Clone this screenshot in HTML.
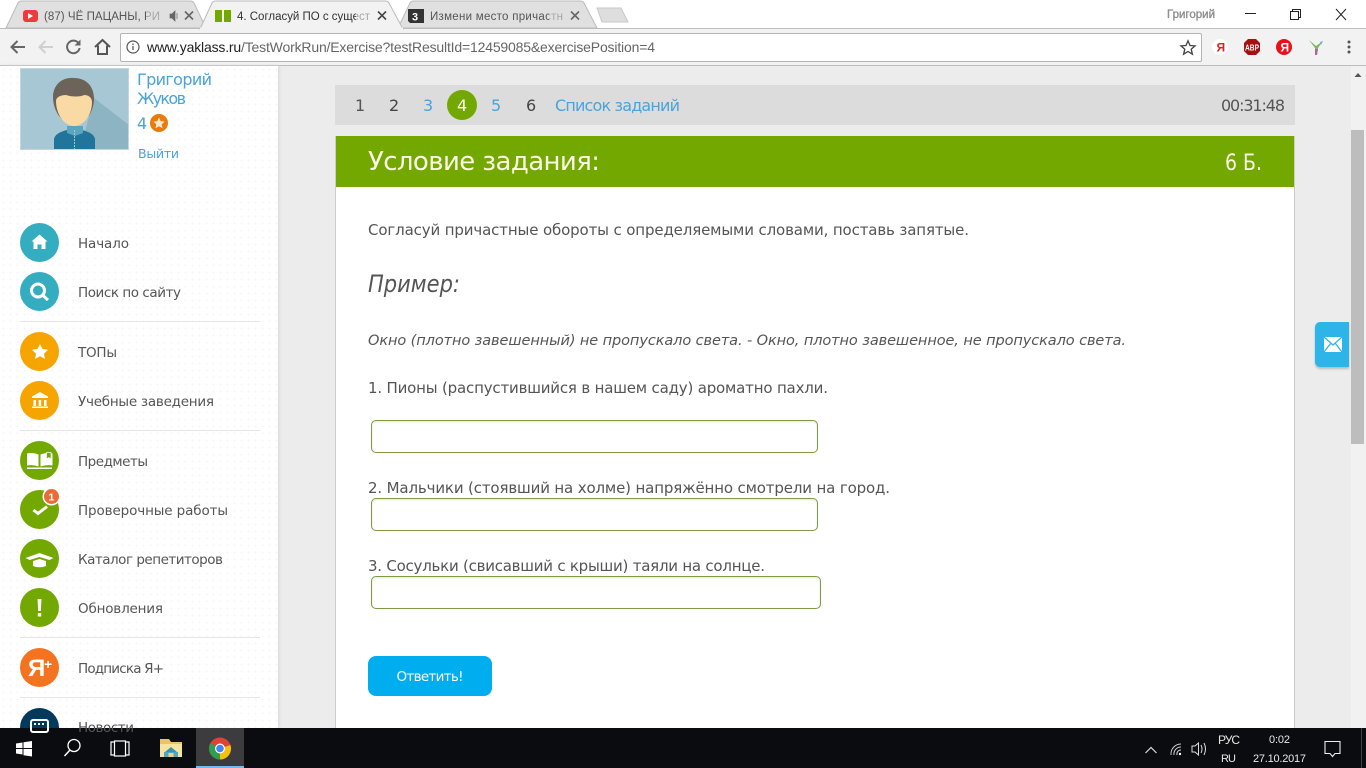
<!DOCTYPE html>
<html lang="ru"><head><meta charset="utf-8"><title>YaKlass</title>
<style>
html,body{margin:0;padding:0;width:1366px;height:768px;overflow:hidden;background:#ececec;font-family:"Liberation Sans","Noto Sans CJK SC",sans-serif}
div,input,button{position:absolute;box-sizing:border-box}
#side{left:0;top:66px;width:278px;height:662px;background-color:#fff;background-image:radial-gradient(#f6f6f6 .8px,transparent 1px);background-size:7px 7px;box-shadow:1px 0 3px #d5d5d5}
.sep{left:20px;width:240px;height:1px;background:#e6e6e6}
.c{left:20px;width:39px;height:39px;border-radius:50%}
input{background:#fff;border:1px solid #7f9a45;border-radius:5px;box-shadow:inset 0 1px 2px #e3e8d5;height:33px;left:371px;width:447px;padding:0;margin:0}
#ov{left:0;top:0}
svg{position:absolute;left:0;top:0}
.o{font-family:"DejaVu Sans","Liberation Sans",sans-serif}
</style></head><body>

<div style="left:0;top:0;width:1366px;height:28px;background:#fff"></div>
<div style="left:0;top:28px;width:1366px;height:38px;background:#f2f2f2;border-top:1px solid #bdbdbd;border-bottom:1px solid #bdbdbd"></div>
<div style="left:120px;top:33px;width:1082px;height:29px;background:#fff;border:1px solid #b4b4b4;border-radius:2px"></div>

<div id="side"></div>
<div class="sep" style="top:321px"></div>
<div class="sep" style="top:430px"></div>
<div class="sep" style="top:637px"></div>
<div class="sep" style="top:697px"></div>
<div class="c" style="top:223px;background:#35adc1"></div>
<div class="c" style="top:272px;background:#35adc1"></div>
<div class="c" style="top:332px;background:#f5a400"></div>
<div class="c" style="top:381px;background:#f5a400"></div>
<div class="c" style="top:441px;background:#73a800"></div>
<div class="c" style="top:490px;background:#73a800"></div>
<div class="c" style="top:539px;background:#73a800"></div>
<div class="c" style="top:588px;background:#73a800"></div>
<div class="c" style="top:648px;background:#f47321"></div>
<div class="c" style="top:708px;background:#03395c"></div>

<div style="left:335px;top:85px;width:960px;height:40px;background:#dcdcdc"></div>
<div style="left:447px;top:90px;width:30px;height:30px;border-radius:50%;background:#73a800"></div>
<div style="left:335px;top:136px;width:960px;height:600px;background:#fff;border-left:1px solid #ccc;border-right:1px solid #ccc"></div>
<div style="left:336px;top:136px;width:958px;height:51px;background:#73a800"></div>
<input type="text" style="top:420px">
<input type="text" style="top:498px">
<input type="text" style="top:576px;width:450px">
<div style="left:368px;top:656px;width:124px;height:40px;background:#00aeef;border-radius:8px"></div>

<div style="left:1351px;top:66px;width:15px;height:662px;background:#f1f1f1"></div>
<div style="left:1351px;top:130px;width:13px;height:314px;background:#bdbdbd"></div>
<div style="left:1315px;top:322px;width:34px;height:45px;background:#2db5ea;border-radius:5px 0 0 5px;box-shadow:0 2px 2px #bbb"></div>

<div style="left:0;top:728px;width:1366px;height:40px;background:#0b0c10"></div>
<div style="left:196px;top:728px;width:48px;height:40px;background:#3c3c3f;border-bottom:2px solid #76b9ed"></div>

<svg id="ov" width="1366" height="768" viewBox="0 0 1366 768" font-family="'Liberation Sans',sans-serif">
<!-- tabs -->
<path d="M6 28 L18 3 Q19 1 22 1 H190 Q193 1 194 3 L206 28Z" fill="#e0e0e0" stroke="#bbb"/>
<path d="M398 28 L410 3 Q411 1 414 1 H580 Q583 1 584 3 L597 28Z" fill="#e0e0e0" stroke="#bbb"/>
<path d="M200 29 L212 3 Q213 1 216 1 H385 Q388 1 389 3 L403 29Z" fill="#f2f2f2" stroke="#bbb"/>
<path d="M200 28.500H403" stroke="#f2f2f2" stroke-width="2"/>
<path d="M597 8 H621 L628 22 H602Z" fill="#dedede" stroke="#c8c8c8"/>
<rect x="23" y="10" width="15" height="12" rx="3" fill="#ee3a3a"/><path d="M28 13 L33 16 L28 19Z" fill="#fff"/>
<text x="44" y="20" font-size="11.500" fill="#555" textLength="116">(87) ЧЁ ПАЦАНЫ, РИ</text>
<rect x="146" y="8" width="16" height="15" fill="#e0e0e0" opacity=".6"/>
<path d="M170 14h2l3-3v10l-3-3h-2z M177 13v6" fill="#666" stroke="#666" stroke-width=".7"/>
<path d="M185 11.500l8 8m0-8l-8 8" stroke="#666" stroke-width="1.600"/>
<rect x="215" y="10" width="7" height="12" fill="#73a800"/><rect x="224" y="10" width="7" height="12" fill="#73a800"/>
<text x="237" y="20" font-size="11.500" fill="#333" textLength="133">4. Согласуй ПО с сущест</text>
<rect x="356" y="8" width="14" height="15" fill="#f2f2f2" opacity=".6"/>
<path d="M378 11.500l8 8m0-8l-8 8" stroke="#444" stroke-width="1.600"/>
<path d="M408 9h16v14h-14l-2-2z" fill="#333"/><text x="412" y="20.500" font-size="11" font-weight="700" fill="#fff">3</text>
<text x="430" y="20" font-size="11.500" fill="#555" textLength="133">Измени место причастн</text>
<rect x="549" y="8" width="14" height="15" fill="#e0e0e0" opacity=".6"/>
<path d="M571 11.500l8 8m0-8l-8 8" stroke="#666" stroke-width="1.600"/>
<!-- window -->
<text x="1167" y="18" font-size="11.500" fill="#999" stroke="#777" stroke-width=".3" textLength="48">Григорий</text>
<path d="M1245 13.500h11" stroke="#222"/>
<path d="M1290.500 11.500h8v8h-8z M1292.500 11.500v-2h8v8h-2" fill="none" stroke="#222"/>
<path d="M1336 9l10 11m0-11l-10 11" stroke="#222" fill="none"/>
<!-- toolbar -->
<path d="M25 47H11.500M17.500 41l-6 6 6 6" fill="none" stroke="#666" stroke-width="2"/>
<path d="M53 47H39.500M45.500 41l-6 6 6 6" fill="none" stroke="#d0d0d0" stroke-width="2"/>
<path d="M79 44a6.300 6.300 0 1 0 .6 4" fill="none" stroke="#666" stroke-width="2"/><path d="M80.500 39.500v6h-6z" fill="#666"/>
<path d="M95 47l7.500-7 7.500 7M98 45.500v8.500h9v-8.500" fill="none" stroke="#555" stroke-width="2"/>
<circle cx="133" cy="47" r="6" fill="none" stroke="#555" stroke-width="1.200"/><path d="M133 46v4M133 43.500v1.500" stroke="#555" stroke-width="1.300"/>
<text x="147" y="52" font-size="14" fill="#666" textLength="508"><tspan fill="#222">www.yaklass.ru</tspan>/TestWorkRun/Exercise?testResultId=12459085&amp;exercisePosition=4</text>
<path d="M1188 40.800l2 4.700 5 .4-3.800 3.300 1.200 5-4.400-2.700-4.400 2.700 1.200-5-3.800-3.300 5-.4z" fill="none" stroke="#444" stroke-width="1.300"/>
<circle cx="1220" cy="47" r="8" fill="#fff"/><text x="1216.500" y="51.500" font-size="12" font-weight="700" fill="#d22">Я</text>
<path d="M1248 39h8l4 4v8l-4 4h-8l-4-4v-8z" fill="#a80f0f"/><text x="1245" y="50.500" font-size="8.500" font-weight="700" fill="#fff" textLength="14" lengthAdjust="spacingAndGlyphs">ABP</text>
<circle cx="1284" cy="47" r="8" fill="#e8101a"/><text x="1280.500" y="51.500" font-size="12" font-weight="700" fill="#fff">Я</text>
<path d="M1309 40l7 6 7-5-5 7-1 7-2 0 0-7z" fill="#7fb56a"/><path d="M1315 49l3 0-1 6-2 0z" fill="#a56aa0"/><path d="M1320 42l3-1-2 4z" fill="#5bb8d0"/>
<circle cx="1349" cy="42" r="1.500" fill="#555"/><circle cx="1349" cy="47" r="1.500" fill="#555"/><circle cx="1349" cy="52" r="1.500" fill="#555"/>

<!-- avatar -->
<svg x="20" y="68" width="109" height="82" viewBox="0 0 109 82">
<rect width="109" height="82" fill="#a8c7d4"/>
<path d="M74 30 L109 57 V82 H60Z" fill="#8db4c3"/>
<path d="M34 82V71q1-6 13-9l7-2 8 2q12 3 13 9v11z" fill="#21749a"/>
<path d="M47 58h16v7l-8 3-8-3z" fill="#5ba6bf"/><path d="M54.500 62v20" stroke="#9cc6d4" stroke-dasharray="2 1"/>
<path d="M54 10c-12-1-21 7-21 19 0 9 4 18 9 22 3 4 8 6 12 6s10-2 13-7c4-4 7-12 7-19 0-13-8-21-20-21z" fill="#6c6459"/>
<path d="M36 33c0-4 5-6 10-6 5 2 15 2 18 0 5 0 8 3 8 7 0 13-8 24-18 24S36 46 36 33z" fill="#f9d9a4"/>
</svg>
<rect x="20.500" y="68.500" width="108" height="81" fill="none" stroke="#c5d6dc"/>
<g class="o">
<text x="137" y="85" font-size="16" fill="#4aa3da" textLength="75">Григорий</text>
<text x="137" y="104" font-size="16" fill="#4aa3da" textLength="49">Жуков</text>
<text x="137" y="129" font-size="16" fill="#4aa3da">4</text>
<text x="138" y="158" font-size="12.500" fill="#4aa3da" textLength="41">Выйти</text>
</g>
<circle cx="159" cy="123" r="9" fill="#e87b0c"/><path d="M159 117.500l1.700 3.600 3.900.5-2.900 2.700.8 3.900-3.500-2-3.500 2 .8-3.900-2.900-2.700 3.900-.5z" fill="#fbe9d0"/>

<!-- menu icons -->
<path d="M39.500 234.500l-8 7h2v7.500h4v-4.500h4v4.500h4V241.500h2z" fill="#fff"/>
<circle cx="38" cy="290.500" r="6.500" fill="none" stroke="#fff" stroke-width="3"/><path d="M43 295.500l5 4.500" stroke="#fff" stroke-width="3"/>
<path d="M40 344l2.500 5 5.500.7-4 4 1 5.300-5-2.700-5 2.700 1-5.300-4-4 5.500-.7z" fill="#fff"/>
<path d="M40 392l-8 4.500v1.500h16v-1.500zM33.500 400h2.500v6h-2.500zM38.700 400h2.500v6h-2.500zM44 400h2.500v6H44zM32 406.500h16v1.500H32z" fill="#fff"/>
<path d="M27 453.500q6-1.500 11.500 1v12q-5.500-2-11.500-1zM40.500 454.500q6-2.500 12-1v12q-6-1-12 1z" fill="#fff"/><path d="M46.500 452.500h4.500v6.500l-2.200-1.500-2.300 1.500z" fill="#73a800" stroke="#fff" stroke-width=".7"/><path d="M27 467.500h25v1.500H27z" fill="#fff"/>
<path d="M33.500 510l4.500 3.500 9-7" fill="none" stroke="#fff" stroke-width="3"/>
<circle cx="51.500" cy="496.500" r="9" fill="#fff"/><circle cx="51.500" cy="496.500" r="7.500" fill="#ea6c35"/><text x="48.500" y="500.500" font-size="10.500" font-weight="700" fill="#fff">1</text>
<path d="M39.500 553l-14 5 4 2 10-3 10 3 4-2z" fill="#fff"/><path d="M33 561l6.500-2 6.500 2v5q-6.500 2.500-13 0z" fill="#fff"/>
<path d="M37.500 599h4l-.7 12h-2.600zM37.800 613h3.400v3.500h-3.400z" fill="#fff"/>
<text x="28" y="676" font-size="24" font-weight="700" fill="#fff">Я</text><text x="44" y="669" font-size="14" font-weight="700" fill="#fff">+</text>
<rect x="31" y="720" width="17" height="12" rx="2" fill="none" stroke="#fff" stroke-width="2"/><path d="M34 724h2M38 724h2M42 724h2" stroke="#fff" stroke-width="2"/>

<!-- menu text -->
<g class="o" font-size="13.500" fill="#555">
<text x="78" y="248" textLength="51">Начало</text>
<text x="78" y="297" textLength="103">Поиск по сайту</text>
<text x="78" y="357" textLength="39">ТОПы</text>
<text x="78" y="406" textLength="136">Учебные заведения</text>
<text x="78" y="466" textLength="70">Предметы</text>
<text x="78" y="515" textLength="150">Проверочные работы</text>
<text x="78" y="564" textLength="145">Каталог репетиторов</text>
<text x="78" y="613" textLength="85">Обновления</text>
<text x="78" y="673" textLength="86">Подписка Я+</text>
<text x="78" y="732" textLength="56">Новости</text>
</g>

<!-- nav -->
<g class="o" font-size="16">
<text x="355" y="111" fill="#555">1</text>
<text x="389" y="111" fill="#444">2</text>
<text x="423" y="111" fill="#4aa3da">3</text>
<text x="457" y="111" fill="#fff">4</text>
<text x="491" y="111" fill="#4aa3da">5</text>
<text x="526" y="111" fill="#444">6</text>
<text x="555" y="111" fill="#4aa3da" textLength="125">Список заданий</text>
<text x="1221" y="111" fill="#555" textLength="64">00:31:48</text>
</g>
<g class="o">
<text x="368" y="170" font-size="26" fill="#fbfbe8" textLength="232">Условие задания:</text>
<text x="1225" y="170" font-size="22" fill="#fbfbe8" textLength="37" lengthAdjust="spacingAndGlyphs">6 Б.</text>

<!-- content -->
<g font-size="15" fill="#555">
<text x="368" y="235" textLength="601">Согласуй причастные обороты с определяемыми словами, поставь запятые.</text>
<text x="368" y="292" font-size="24" font-style="italic" textLength="92" lengthAdjust="spacingAndGlyphs">Пример:</text>
<text x="368" y="345" font-size="14.500" font-style="italic" textLength="758">Окно (плотно завешенный) не пропускало света. - Окно, плотно завешенное, не пропускало света.</text>
<text x="368" y="393" textLength="460">1. Пионы (распустившийся в нашем саду) ароматно пахли.</text>
<text x="368" y="493" textLength="522">2. Мальчики (стоявший на холме) напряжённо смотрели на город.</text>
<text x="368" y="571" textLength="397">3. Сосульки (свисавший с крыши) таяли на солнце.</text>
</g>
<text x="396.500" y="681" font-size="13.500" fill="#fff" textLength="67">Ответить!</text>
</g>

<!-- scrollbar arrow + mail -->
<path d="M1354.500 77l3.500-4 3.500 4z" fill="#555"/>
<path d="M1324 337h18v15h-18z" fill="#fff"/><path d="M1324 337l9 8 9-8M1324 352l7-9M1342 352l-7-9" fill="none" stroke="#2db5ea" stroke-width="1.300"/>

<!-- taskbar -->
<path d="M16 743.500l6.500-1v5.500H16zM23.500 742.300l8.500-1.300v7h-8.500zM16 749h6.500v5.500l-6.500-1zM23.500 749H32v7.500l-8.500-1.300z" fill="#fff"/>
<circle cx="74" cy="745.500" r="6" fill="none" stroke="#fff" stroke-width="1.300"/><path d="M70 750l-5.500 6" stroke="#fff" stroke-width="1.500"/>
<path d="M114 742h-3v13h3M126 742h3v13h-3" fill="none" stroke="#fff" stroke-width="1.200"/><rect x="114.500" y="741" width="11" height="15" fill="none" stroke="#fff" stroke-width="1.200"/>
<path d="M160 739h9l2 3h11v15h-22z" fill="#e8c568"/><path d="M160 744h22v13h-22z" fill="#f6e3a0"/><rect x="164" y="752" width="14" height="5" fill="#4aa9c4"/><path d="M171 747l6 5h-12z" fill="#3a93ad"/><rect x="168.500" y="753" width="5" height="4" fill="#f1d27a"/>
<circle cx="220" cy="748.500" r="11" fill="#db4437"/>
<path d="M220 748.500L230.500 745A11 11 0 0 1 220 759.500z" fill="#f4c20d"/>
<path d="M220 748.500L220 759.500A11 11 0 0 1 210.500 743z" fill="#2f9e4f"/>
<circle cx="220" cy="748.500" r="5" fill="#fff"/><circle cx="220" cy="748.500" r="3.800" fill="#4285f4"/>

<!-- tray -->
<path d="M1145.500 753l5.500-5.500 5.500 5.500" fill="none" stroke="#ddd" stroke-width="1.200"/>
<path d="M1171 755a10 10 0 0 1 10-11M1174 755a7 7 0 0 1 7-8M1177 755a4 4 0 0 1 4-5" fill="none" stroke="#ccc"/><circle cx="1180" cy="754" r="1.200" fill="#fff"/>
<path d="M1192 746h3l3.500-3v12l-3.500-3h-3z" fill="none" stroke="#ddd"/><path d="M1201 745q2 4 0 8M1204 743q3 6 0 12" fill="none" stroke="#ddd"/>
<g font-size="11" fill="#e8e8e8">
<text x="1218" y="744" textLength="22" font-size="12">РУС</text>
<text x="1221" y="762" textLength="15">RU</text>
<text x="1269" y="743" textLength="21">0:02</text>
<text x="1253" y="762" textLength="53">27.10.2017</text>
</g>
<path d="M1325 741.500h15v12h-5l-2.500 3-2.500-3h-5z" fill="none" stroke="#eee" stroke-width="1.100"/>
<path d="M1361.500 728v40" stroke="#444"/>
</svg>
</body></html>
